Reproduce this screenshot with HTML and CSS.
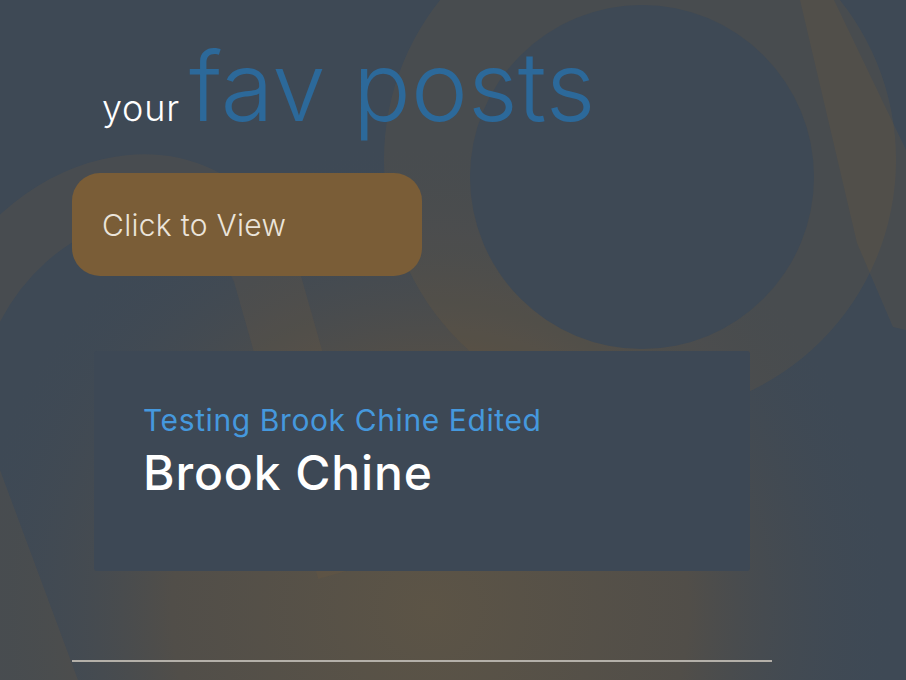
FILE: index.html
```html
<!DOCTYPE html>
<html lang="en">
<head>
<meta charset="utf-8">
<title>your fav posts</title>
<link rel="stylesheet" href="styles.css">
</head>
<body>
<svg class="backdrop" viewBox="0 0 906 680" preserveAspectRatio="none" aria-hidden="true">
  <defs>
    <radialGradient id="glow" cx="430" cy="610" r="470" gradientUnits="userSpaceOnUse">
      <stop offset="0" stop-color="#5c5446"/>
      <stop offset="0.55" stop-color="#514e49"/>
      <stop offset="1" stop-color="#3e4955" stop-opacity="0"/>
    </radialGradient>
  </defs>
  <rect width="906" height="680" fill="#3e4955"/>
  <rect width="906" height="680" fill="url(#glow)"/>
  <path d="M -40 330 C 20 180, 200 130, 265 270 L 350 570" fill="none" stroke="#7a603a" stroke-opacity="0.17" stroke-width="66" stroke-linejoin="round"/>
  <polygon points="0,470 0,680 78,680" fill="#7a603a" fill-opacity="0.16"/>
  <circle cx="640" cy="160" r="256" fill="#7a603a" fill-opacity="0.18"/>
  <polygon points="800,0 834,0 906,150 906,330 893,327 857,243" fill="#7a603a" fill-opacity="0.18"/>
  <circle cx="642" cy="177" r="172" fill="#3e4955"/>
</svg>

<main class="page">
  <h1 class="title"><span class="title-small">your</span> <span class="title-big">fav posts</span></h1>
  <a class="view-btn" href="#">Click to View</a>
  <article class="card">
    <p class="card-sub">Testing Brook Chine Edited</p>
    <h2 class="card-name">Brook Chine</h2>
  </article>
  <hr class="rule">
</main>
</body>
</html>
```

FILE: styles.css
```css
html, body {
  margin: 0;
  padding: 0;
  height: 100%;
  overflow: hidden;
}

body {
  position: relative;
  background: #3e4955;
  font-family: "Inter", "Open Sans", "DejaVu Sans", sans-serif;
}

.backdrop {
  position: absolute;
  inset: 0;
  width: 906px;
  height: 680px;
  z-index: 0;
}

.page {
  position: relative;
  z-index: 1;
  width: 700px;
  padding: 0 0 0 72px;
  display: flex;
  flex-direction: column;
  align-items: flex-start;
}

.title {
  margin: 36px 0 0 30px;
  font-weight: 300;
  line-height: 100px;
  white-space: nowrap;
}

.title-small {
  font-size: 36px;
  color: #ffffff;
  letter-spacing: 0.8px;
}

.title-big {
  font-size: 96px;
  color: #2c699a;
  letter-spacing: 0.2px;
}

.view-btn {
  margin-top: 13px;
  box-sizing: border-box;
  width: 350px;
  height: 103px;
  padding-left: 30px;
  display: flex;
  align-items: center;
  background: #7a5d37;
  border-radius: 28px;
  color: #ebe4da;
  font-size: 30px;
  font-weight: 300;
  letter-spacing: 0.3px;
  text-decoration: none;
}

.card {
  margin: 75px 0 0 22px;
  box-sizing: border-box;
  width: 656px;
  height: 220px;
  padding: 49px 49px;
  background: #3d4855;
  border-radius: 3px;
}

.card-sub {
  margin: 0;
  font-size: 30px;
  line-height: 40px;
  color: #4598dd;
  font-weight: 400;
  letter-spacing: 0.6px;
}

.card-name {
  margin: 4px 0 0 0;
  font-size: 48px;
  line-height: 58px;
  color: #ffffff;
  font-weight: 500;
  letter-spacing: 0.9px;
}

.rule {
  margin: 89px 0 0 0;
  width: 700px;
  height: 0;
  border: 0;
  border-top: 2px solid #b4b0a9;
}
```
